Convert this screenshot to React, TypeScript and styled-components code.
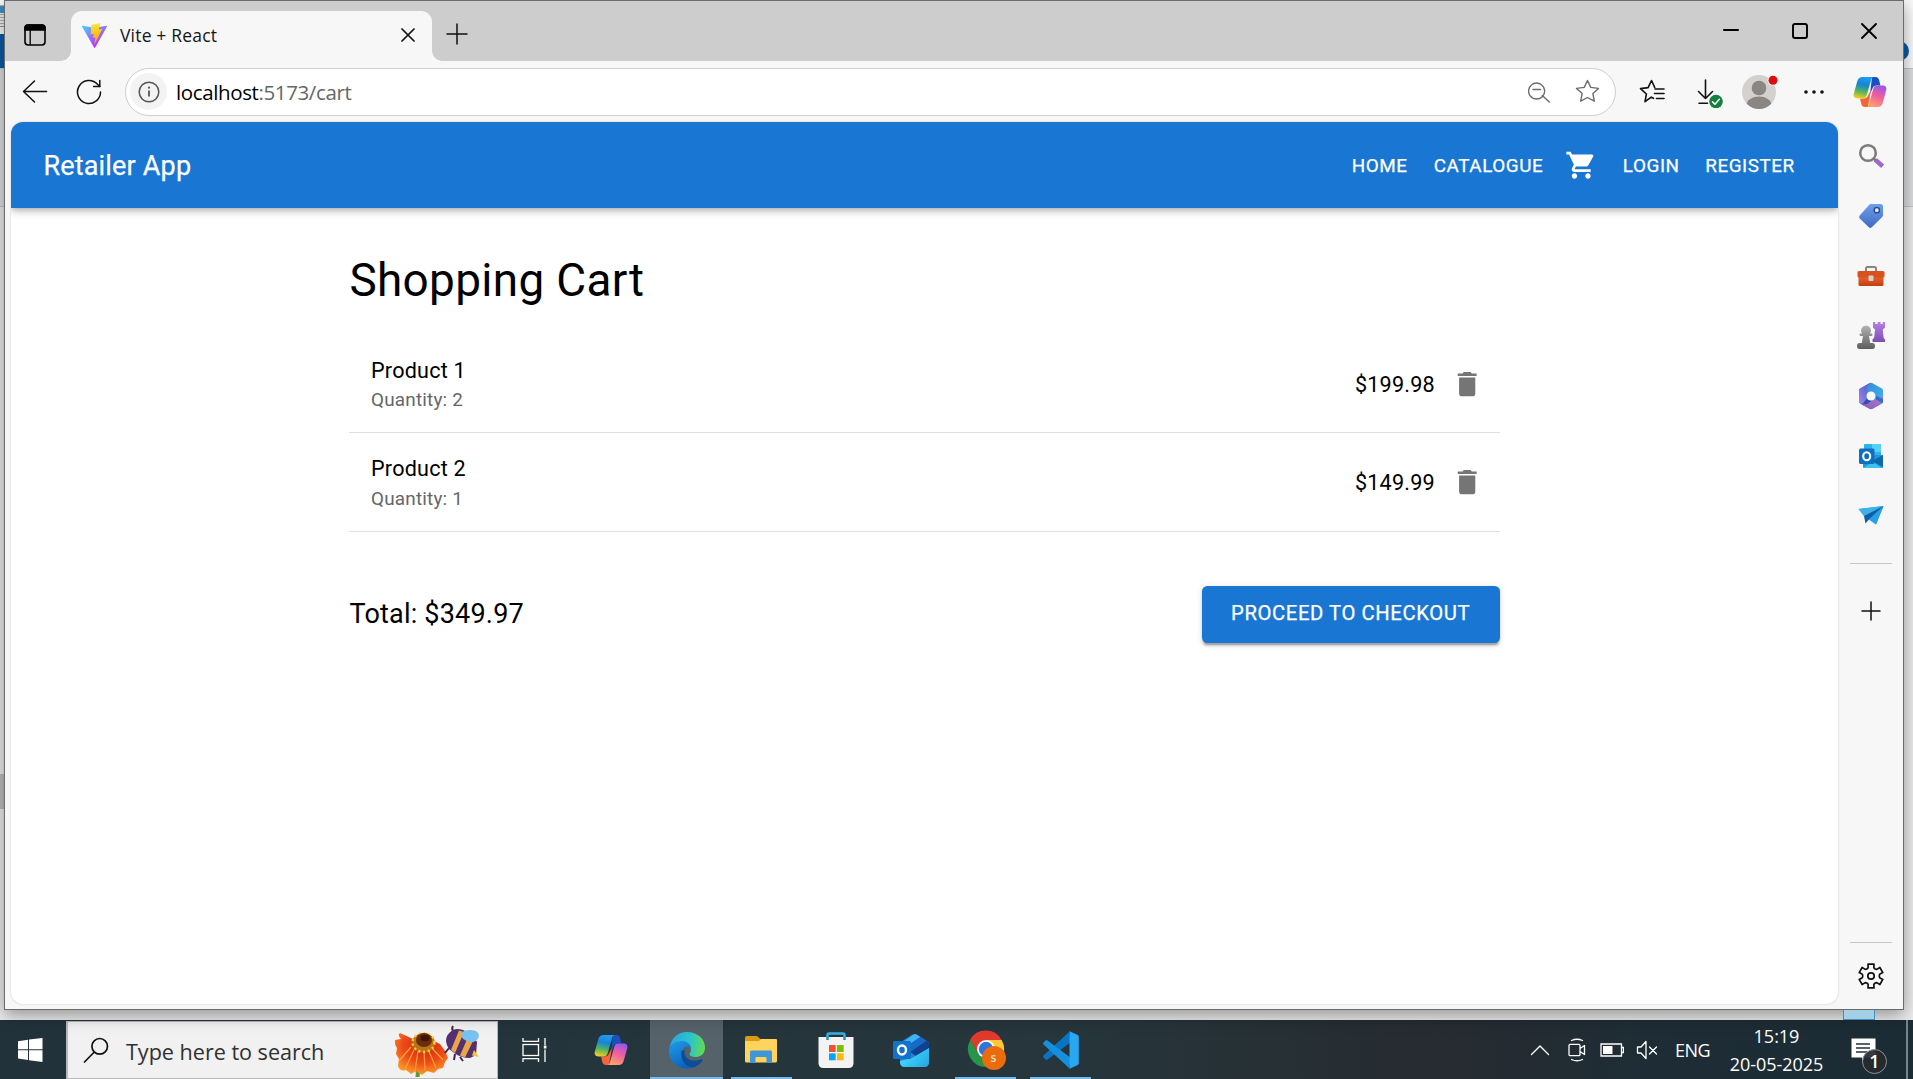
import React from "react";
import styled, { createGlobalStyle } from "styled-components";
import { MdDelete, MdShoppingCart } from "react-icons/md";

const UI = `"Open Sans", "Noto Sans", sans-serif`;
const APP = `Roboto, "Liberation Sans", sans-serif`;

const GlobalStyle = createGlobalStyle`
  * { box-sizing: border-box; }
  html, body { margin: 0; padding: 0; overflow: hidden; }
  button { border: 0; background: none; padding: 0; margin: 0; color: inherit; }
  svg { display: block; flex: none; }
`;

/* ---------- desktop ---------- */

const Desktop = styled.div`
  position: relative;
  width: 1913px;
  height: 1079px;
  overflow: hidden;
  display: flex;
  flex-direction: column;
  font-family: ${UI};
`;

const Backdrop = styled.div`
  flex: 1;
  display: flex;
  flex-direction: column;
  background: #ececec;
`;

const BackStrip = styled.div<{ $h: number; $bg: string; $line?: boolean }>`
  height: ${(p) => p.$h}px;
  background: ${(p) => p.$bg};
  border-bottom: ${(p) => (p.$line ? "1px solid #c4c6c8" : "0")};
`;

const BackAccent = styled.div`
  position: absolute;
  left: 0;
  top: 34px;
  width: 8px;
  height: 34px;
  background: #0a5ca8;
`;

const BackRibbon = styled.div`
  position: absolute;
  left: 0;
  top: 5px;
  width: 5px;
  height: 22px;
  border-top: 1px solid #b5b5b5;
  border-bottom: 1px solid #9a9a9a;
  background: repeating-linear-gradient(#f3f3f3 0 2px, #a9b0b5 2px 3px);
`;

const BackMark = styled.div`
  position: absolute;
  left: 0;
  top: 6px;
  width: 4px;
  height: 7px;
  background: #3f8fc4;
`;

const BackThumb = styled.div`
  position: absolute;
  left: 0;
  top: 774px;
  width: 5px;
  height: 35px;
  background: #bdbdbd;
`;

const BackBadge = styled.div`
  position: absolute;
  left: 1889px;
  top: 41px;
  width: 20px;
  height: 20px;
  border-radius: 50%;
  background: #0a5ca8;
`;

const BackSelection = styled.div`
  position: absolute;
  left: 1843px;
  top: 1000px;
  width: 32px;
  height: 20px;
  border: 1px solid #3a93c4;
  background: #a5cfe4;
  z-index: 3;
  clip-path: inset(10px 0 0 0);
`;

/* ---------- browser window ---------- */

const Window = styled.div`
  position: absolute;
  left: 4px;
  top: 0;
  width: 1900px;
  height: 1010px;
  border: 1px solid #6b6b6b;
  background: #f7f7f7;
  display: flex;
  flex-direction: column;
  box-shadow: 0 5px 16px rgba(0, 0, 0, 0.38);
  z-index: 2;
`;

const TitleBar = styled.div`
  height: 60px;
  flex: none;
  background: #cdcdcd;
  display: flex;
  align-items: stretch;
`;

const TabActions = styled.div`
  width: 66px;
  display: flex;
  align-items: center;
  padding: 7px 0 0 19px;
`;

const Tab = styled.div`
  position: relative;
  width: 361px;
  margin-top: 10px;
  padding: 0 17px 2px 11px;
  display: flex;
  align-items: center;
  background: #f7f7f7;
  border-radius: 11px 11px 0 0;
  &::before, &::after {
    content: "";
    position: absolute;
    bottom: 0;
    width: 10px;
    height: 10px;
  }
  &::before {
    left: -10px;
    background: radial-gradient(circle at 0 0, transparent 9.5px, #f7f7f7 10px);
  }
  &::after {
    right: -10px;
    background: radial-gradient(circle at 100% 0, transparent 9.5px, #f7f7f7 10px);
  }
`;

const TabTitle = styled.span`
  flex: 1;
  margin-left: 13px;
  font-size: 17.5px;
  letter-spacing: 0.18px;
  line-height: 24px;
  color: #151515;
`;

const NewTab = styled.button`
  width: 50px;
  display: flex;
  align-items: center;
  justify-content: center;
  padding: 6px 0 0 0;
`;

const WindowControls = styled.div`
  margin-left: auto;
  display: flex;
`;

const WindowButton = styled.button`
  width: 69px;
  display: flex;
  align-items: center;
  justify-content: center;
`;

const Toolbar = styled.div`
  height: 61px;
  flex: none;
  display: flex;
  align-items: center;
`;

const ToolButton = styled.button<{ $w: number }>`
  width: ${(p) => p.$w}px;
  height: 48px;
  flex: none;
  display: flex;
  align-items: center;
  justify-content: center;
`;

const AddressBar = styled.div`
  width: 1491px;
  height: 48px;
  flex: none;
  margin-left: 12px;
  border: 1px solid #cfcfcf;
  border-radius: 24px;
  background: #fff;
  display: flex;
  align-items: center;
  padding: 0 3px 0 4px;
`;

const SiteInfo = styled.span`
  width: 37px;
  height: 37px;
  border-radius: 50%;
  background: #f3f3f3;
  display: flex;
  align-items: center;
  justify-content: center;
`;

const Url = styled.span`
  flex: 1;
  margin-left: 9px;
  font-size: 20.5px;
  letter-spacing: -0.38px;
  line-height: 28px;
  color: #666;
  b { font-weight: 400; color: #000; }
`;

const Main = styled.div`
  flex: 1;
  display: flex;
  padding-left: 6px;
`;

const Page = styled.div`
  width: 1827px;
  height: 882px;
  background: #fff;
  border-radius: 12px;
  overflow: hidden;
  box-shadow: 0 0 2px rgba(0, 0, 0, 0.22);
  font-family: ${APP};
`;

const SideBar = styled.div`
  flex: 1;
  display: flex;
  flex-direction: column;
  align-items: center;
  padding: 4px 0 0 1px;
`;

const SideItem = styled.button<{ $h?: number }>`
  width: 60px;
  height: ${(p) => p.$h ?? 60}px;
  flex: none;
  display: flex;
  align-items: center;
  justify-content: center;
`;

const SideRule = styled.div<{ $top: number }>`
  width: 42px;
  height: 1px;
  flex: none;
  margin-top: ${(p) => p.$top}px;
  background: #c6c6c6;
`;

const Push = styled.div`
  flex: 1;
`;

/* ---------- retailer page ---------- */

const AppBar = styled.header`
  position: relative;
  height: 86.4px;
  display: flex;
  align-items: center;
  padding: 0 32.4px;
  background: #1976d2;
  color: #fff;
  box-shadow: 0 2.7px 5.4px -1.35px rgba(0, 0, 0, 0.2), 0 5.4px 6.75px rgba(0, 0, 0, 0.14),
    0 1.35px 13.5px rgba(0, 0, 0, 0.12);
`;

const Brand = styled.div`
  flex: 1;
  padding-top: 2px;
  font-size: 27px;
  font-weight: 400;
  letter-spacing: 0.18px;
  line-height: 43px;
  -webkit-text-stroke: 0.25px #fff;
`;

const NavButton = styled.button`
  min-width: 86.4px;
  padding: 8.1px 10.8px;
  font-family: ${APP};
  font-size: 18.9px;
  font-weight: 400;
  line-height: 33px;
  letter-spacing: 0.54px;
  -webkit-text-stroke: 0.25px #fff;
`;

const IconButton = styled.button<{ $color: string; $pull?: boolean }>`
  padding: 10.8px;
  margin-right: ${(p) => (p.$pull ? "-16.2px" : "0")};
  color: ${(p) => p.$color};
  svg { width: 32.4px; height: 32.4px; }
`;

const Container = styled.main`
  width: 1150.2px;
  margin: 0 auto;
  padding-top: 43.2px;
`;

const Heading = styled.h1`
  margin: 0 0 16.07px;
  font-size: 45.9px;
  font-weight: 400;
  line-height: 56.7px;
  letter-spacing: 0.34px;
  color: #000;
`;

const CartList = styled.ul`
  list-style: none;
  margin: 0;
  padding: 10.8px 0;
`;

const CartRow = styled.li`
  height: 98.25px;
  display: flex;
  align-items: center;
  padding: 0 21.6px;
  border-bottom: 1px solid #e0e0e0;
`;

const ItemText = styled.div`
  flex: 1;
`;

const ItemName = styled.div`
  padding-top: 1px;
  font-size: 21.6px;
  line-height: 32.4px;
  letter-spacing: 0.2px;
  color: #000;
`;

const ItemMeta = styled.div`
  margin-top: -1px;
  font-size: 18.9px;
  line-height: 27px;
  letter-spacing: 0.2px;
  color: #666;
`;

const Price = styled.div`
  margin-right: 5.4px;
  padding-top: 2px;
  font-size: 21.6px;
  line-height: 32.4px;
  letter-spacing: 0.2px;
  color: #000;
`;

const Summary = styled.div`
  margin-top: 43.2px;
  display: flex;
  align-items: center;
  justify-content: space-between;
`;

const Total = styled.div`
  padding-top: 1px;
  font-size: 27px;
  line-height: 43px;
  letter-spacing: 0.2px;
  color: #000;
`;

const Checkout = styled.button`
  width: 298px;
  padding: 10.8px 0;
  border-radius: 5.4px;
  background: #1976d2;
  color: #fff;
  font-family: ${APP};
  font-size: 20.25px;
  font-weight: 400;
  line-height: 35.4px;
  letter-spacing: 0.58px;
  white-space: nowrap;
  -webkit-text-stroke: 0.25px #fff;
  box-shadow: 0 4px 1.35px -2.7px rgba(0, 0, 0, 0.2), 0 2.7px 2.7px rgba(0, 0, 0, 0.14),
    0 1.35px 6.75px rgba(0, 0, 0, 0.12);
`;

/* ---------- taskbar ---------- */

const Taskbar = styled.div`
  height: 59px;
  flex: none;
  display: flex;
  background: linear-gradient(90deg, #22323b 0, #26363c 55%, #262c31 74%, #242b32 79%, #1e2d35 86%, #1c2c34 100%);
  color: #fff;
`;

const StartTile = styled.div`
  width: 66px;
  display: flex;
  align-items: center;
  padding-left: 18px;
`;

const SearchBox = styled.div`
  width: 432px;
  margin-top: 1px;
  border: 1px solid #b9b9b9;
  border-left-width: 2px;
  background: #f1f1f1;
  display: flex;
  align-items: center;
  padding-left: 15px;
`;

const SearchText = styled.span`
  flex: 1;
  margin: 3px 0 0 17px;
  font-size: 21.6px;
  letter-spacing: -0.02px;
  line-height: 30px;
  color: #303030;
`;

const TaskTile = styled.div<{ $w?: number; $active?: boolean; $line?: boolean }>`
  width: ${(p) => p.$w ?? 75}px;
  display: flex;
  align-items: center;
  justify-content: center;
  background: ${(p) => (p.$active ? "#55626a" : "transparent")};
  border-bottom: ${(p) => (p.$active ? "2px solid #76b9ed" : "0")};
  background-image: ${(p) => (p.$line ? "linear-gradient(#76b9ed, #76b9ed)" : "none")};
  background-size: 61px 2px;
  background-position: center bottom;
  background-repeat: no-repeat;
  padding-top: ${(p) => (p.$active ? 2 : 0)}px;
`;

const Tray = styled.div`
  margin-left: auto;
  display: flex;
  align-items: center;
`;

const TrayIcon = styled.div<{ $w: number }>`
  width: ${(p) => p.$w}px;
  display: flex;
  justify-content: center;
`;

const Lang = styled.div`
  width: 56px;
  text-align: center;
  font-size: 18px;
  letter-spacing: -0.5px;
  padding-left: 3px;
`;

const Clock = styled.div`
  width: 114px;
  padding: 1px 0 0 1px;
  display: flex;
  flex-direction: column;
  align-items: center;
  font-size: 18px;
  line-height: 28px;
  letter-spacing: -0.02px;
  white-space: nowrap;
`;

const Notify = styled.div`
  position: relative;
  width: 73px;
  height: 59px;
  padding: 18px 0 0 18px;
`;

const NotifyCount = styled.span`
  position: absolute;
  left: 29px;
  top: 29px;
  width: 25px;
  height: 25px;
  border: 1px solid #8b9297;
  border-radius: 50%;
  background: rgba(38, 42, 46, 0.93);
  font-size: 18px;
  font-weight: 600;
  line-height: 23px;
  text-align: center;
`;

const ShowDesktop = styled.div`
  width: 7px;
  height: 59px;
  border-left: 2px solid #7a8388;
`;

/* ---------- drawings ---------- */

const Line = ({ d, size = 24, box = 24, w = 1.3, color = "#111" }: { d: string; size?: number; box?: number; w?: number; color?: string }) => (
  <svg width={size} height={size} viewBox={`0 0 ${box} ${box}`} fill="none" stroke={color} strokeWidth={w} strokeLinecap="round" strokeLinejoin="round">
    <path d={d} />
  </svg>
);

const WorkspaceIcon = () => (
  <svg width="22" height="22" viewBox="0 0 22 22" fill="none" stroke="#000" strokeWidth="1.6">
    <rect x="1" y="1" width="20" height="20" rx="3.2" />
    <path d="M1 6V4a3 3 0 0 1 3-3h14a3 3 0 0 1 3 3v2z" fill="#000" />
    <path d="M6.2 6v15" strokeWidth="1.3" />
  </svg>
);

const ViteIcon = () => (
  <svg width="25" height="25" viewBox="0 0 256 257">
    <defs>
      <linearGradient id="viteA" x1="0" x2="0.6" y1="0" y2="0.85">
        <stop offset="0" stopColor="#41d1ff" />
        <stop offset="1" stopColor="#bd34fe" />
      </linearGradient>
      <linearGradient id="viteB" x1="0.43" x2="0.5" y1="0.02" y2="0.9">
        <stop offset="0" stopColor="#ffea83" />
        <stop offset="0.1" stopColor="#ffdd35" />
        <stop offset="1" stopColor="#ffa800" />
      </linearGradient>
    </defs>
    <path fill="url(#viteA)" d="M255.153 37.938 134.897 252.976c-2.483 4.44-8.862 4.466-11.382.048L.875 37.958c-2.746-4.814 1.371-10.646 6.827-9.67l120.385 21.517a6.537 6.537 0 0 0 2.322-.004l117.867-21.483c5.438-.991 9.574 4.796 6.877 9.62Z" />
    <path fill="url(#viteB)" d="M185.432.063 96.44 17.501a3.268 3.268 0 0 0-2.634 3.014l-5.474 92.456a3.268 3.268 0 0 0 3.997 3.378l24.777-5.718c2.318-.535 4.413 1.507 3.936 3.838l-7.361 36.047c-.495 2.426 1.782 4.5 4.151 3.78l15.304-4.649c2.372-.72 4.652 1.36 4.15 3.788l-11.698 56.621c-.732 3.542 3.979 5.473 5.943 2.437l1.313-2.028 72.516-144.72c1.215-2.423-.88-5.186-3.54-4.672l-25.505 4.922c-2.396.462-4.435-1.77-3.759-4.114l16.646-57.705c.677-2.35-1.37-4.583-3.769-4.113Z" />
  </svg>
);

const InfoIcon = () => (
  <svg width="22" height="22" viewBox="0 0 22 22" fill="none" stroke="#555" strokeWidth="1.5">
    <circle cx="11" cy="11" r="9.8" />
    <path d="M11 9.5V15.5" strokeWidth="1.8" />
    <circle cx="11" cy="6.7" r="1.1" fill="#555" stroke="none" />
  </svg>
);

const ReloadIcon = () => (
  <svg width="26" height="26" viewBox="0 0 26 26" fill="none" stroke="#111" strokeWidth="1.5" strokeLinecap="round" strokeLinejoin="round">
    <path d="M24.500 13A11.500 11.500 0 1 1 21.500 5.300L23.800 7.400" />
    <path d="M23.800 1.600V7.400H17.600" />
  </svg>
);

const ZoomOutIcon = () => (
  <Line size={22} box={22} w={1.4} color="#6c6c6c" d="M16.500 8.800a8 8 0 1 1-15.800 0a8 8 0 0 1 15.800 0M5 8.500h7.500M14.300 14.400L21.300 21" />
);

const STAR = "M12.500 1.500l3.300 6.900 7.700 1-5.600 5.200 1.400 7.600-6.800-3.700-6.800 3.700 1.400-7.600L1.500 9.400l7.700-1z";

const FavoritesIcon = () => (
  <Line size={26} box={26} w={1.6} d="M14.500 19.300L12.300 18.100 6 22.700 7.400 15 1.500 9.600l7.600-1L12.500 1.500l3.200 6.900M16 10h9M15.500 14.500h9.500M17.500 19.500H25" />
);

const DownloadIcon = () => (
  <svg width="30" height="32" viewBox="0 0 30 32" fill="none" stroke="#111" strokeWidth="1.6" strokeLinecap="round" strokeLinejoin="round">
    <path d="M9.500 4v18.500M2.500 15.500l7 7 7-7M3 27.300h8.500" />
    <circle cx="20" cy="25.500" r="6.800" fill="#15803d" stroke="none" />
    <path d="M16.500 25.800l2.400 2.400 4.500-5" stroke="#fff" strokeWidth="1.500" />
  </svg>
);

const ProfileIcon = () => (
  <svg width="38" height="36" viewBox="0 0 38 36">
    <defs>
      <clipPath id="face"><circle cx="18" cy="18" r="17" /></clipPath>
    </defs>
    <g clipPath="url(#face)">
      <rect width="38" height="36" fill="#d3d1ce" />
      <circle cx="18" cy="14" r="7.3" fill="#8a8684" />
      <ellipse cx="18" cy="31" rx="12.5" ry="8.4" fill="#8a8684" />
    </g>
    <circle cx="32" cy="6.200" r="5.400" fill="#f7f7f7" />
    <circle cx="32" cy="6.200" r="4.500" fill="#e00b0b" />
  </svg>
);

const MoreIcon = () => (
  <svg width="20" height="6" viewBox="0 0 20 6" fill="#111">
    <circle cx="2" cy="3" r="1.8" /><circle cx="10" cy="3" r="1.8" /><circle cx="18" cy="3" r="1.8" />
  </svg>
);

const CopilotIcon = ({ id }: { id: string }) => (
  <svg width="34" height="34" viewBox="0 0 34 34">
    <defs>
      <linearGradient id={id + "a"} x1="0.5" y1="0" x2="0.3" y2="1">
        <stop offset="0" stopColor="#1e9cf0" /><stop offset="0.35" stopColor="#1784d8" />
        <stop offset="0.65" stopColor="#4fb262" /><stop offset="1" stopColor="#f2cf1d" />
      </linearGradient>
      <linearGradient id={id + "b"} x1="0.7" y1="0" x2="0.3" y2="1">
        <stop offset="0" stopColor="#9a57ee" /><stop offset="0.45" stopColor="#ee5d9f" />
        <stop offset="1" stopColor="#ffa36b" />
      </linearGradient>
    </defs>
    <path d="M19 2h3.400c2 0 3.200 1.200 3.700 3l1.300 5.500h-3.400c-2.500 0-3.900 1-4.600 3.200L17 19z" fill="#1b4fc4" />
    <path d="M15 32h-3c-2 0-3.200-1.200-3.700-3L7 23.500h3.400c2.500 0 3.900-1 4.600-3.200L18 15z" fill="#f4663a" />
    <path d="M9.500 2H21c-1.400 0-2.300 1-2.800 2.600L13.800 20c-.7 2.400-1.900 3.500-4.300 3.500H4.600C1.400 23.500.2 21.500.8 18.800L4.200 6.500C5 3.500 6.500 2 9.500 2z" fill={`url(#${id}a)`} />
    <path d="M24.500 32H13c1.400 0 2.300-1 2.800-2.600L20.200 14c.7-2.400 1.900-3.500 4.300-3.500h4.900c3.200 0 4.400 2 3.800 4.700l-3.400 12.300c-.8 3-2.300 4.500-5.300 4.500z" fill={`url(#${id}b)`} />
  </svg>
);

const SideSearchIcon = () => (
  <svg width="26" height="26" viewBox="0 0 26 26" fill="none">
    <circle cx="10" cy="10" r="7.800" stroke="#7b7b7b" strokeWidth="2.500" />
    <path d="M15.500 15.500l3.500 3" stroke="#777" strokeWidth="2.500" />
    <path d="M19 18.300l4 3.500" stroke="#9a68cf" strokeWidth="4.500" strokeLinecap="square" />
  </svg>
);

const TagIcon = () => (
  <svg width="26" height="26" viewBox="0 0 26 26">
    <defs><linearGradient id="tag" x1="0.5" y1="0" x2="0.5" y2="1"><stop offset="0" stopColor="#6ba1ea" /><stop offset="1" stopColor="#4169c4" /></linearGradient></defs>
    <path d="M13 1h9.500Q25 1 25 3.500V12q0 1-.8 1.900L13.800 24.300q-1.500 1.300-3 0L1.700 15.400q-1.300-1.500 0-3L11.300 1.800Q12 1 13 1z" fill="url(#tag)" />
    <circle cx="18.800" cy="7.200" r="2.600" fill="#eef4ff" stroke="#274a9a" strokeWidth="1.500" />
  </svg>
);

const ToolboxIcon = () => (
  <svg width="28" height="22" viewBox="0 0 28 22">
    <defs><linearGradient id="tb" x1="0" y1="0" x2="0" y2="1"><stop offset="0" stopColor="#f0702f" /><stop offset="1" stopColor="#c33d10" /></linearGradient></defs>
    <path d="M9 7V3.500Q9 2 10.500 2h7Q19 2 19 3.500V7" fill="none" stroke="#858585" strokeWidth="2" />
    <rect x="1.500" y="9" width="25" height="12" rx="1.500" fill="url(#tb)" />
    <rect x="0.500" y="6" width="27" height="6.500" rx="1.500" fill="#d9511c" />
    <rect x="11.500" y="10.500" width="5" height="5.500" rx="1" fill="#d0d0d0" />
  </svg>
);

const ChessIcon = () => (
  <svg width="28" height="28" viewBox="0 0 28 28">
    <defs>
      <linearGradient id="pawn" x1="0" y1="0" x2="0" y2="1"><stop offset="0" stopColor="#b3b3b3" /><stop offset="1" stopColor="#5d5d5d" /></linearGradient>
      <linearGradient id="rook" x1="0" y1="0" x2="0" y2="1"><stop offset="0" stopColor="#b381e6" /><stop offset="1" stopColor="#7e4fae" /></linearGradient>
    </defs>
    <path d="M16 0h2.200v2h2.300V0h3v2h2.300V0H28v5.500l-2.200 2 .7 8 1.500 2v2.500H15.500v-2.500l1.700-2 .8-8-2-2z" fill="url(#rook)" />
    <path d="M9 3.500a5 5 0 0 1 4 8h1.500q1 0 1 1.300t-1 1.300H12l1.200 7H15.500q2.500 0 2.500 3t-2.500 3h-13Q0 27.100 0 24.100t2.500-3H4.800l1.200-7H3.500q-1 0-1-1.300t1-1.300H5a5 5 0 0 1 4-8z" fill="url(#pawn)" />
  </svg>
);

const M365Icon = () => (
  <svg width="26" height="28" viewBox="0 0 26 28">
    <defs>
      <linearGradient id="ma" x1="0" y1="0" x2="1" y2="0.600"><stop offset="0" stopColor="#3b78d8" /><stop offset="1" stopColor="#3ab4e6" /></linearGradient>
      <linearGradient id="mb" x1="0" y1="1" x2="1" y2="0"><stop offset="0" stopColor="#8a58b8" /><stop offset="1" stopColor="#b07ad0" /></linearGradient>
      <linearGradient id="mc" x1="0" y1="1" x2="1" y2="0"><stop offset="0" stopColor="#a78be8" /><stop offset="1" stopColor="#4452c8" /></linearGradient>
      <clipPath id="hex"><path d="M11.400 1.200q1.600-.900 3.200 0l8.900 5.100Q25 7.200 25 8.800V19.200q0 1.600-1.500 2.500l-8.900 5.100q-1.600.900-3.200 0L2.500 21.700Q1 20.800 1 19.200V8.800Q1 7.200 2.500 6.300z" /></clipPath>
    </defs>
    <g clipPath="url(#hex)">
      <rect width="26" height="28" fill="url(#ma)" />
      <path d="M0 0H13L8.500 5V20L5 23 0 22z" fill="url(#mc)" />
      <path d="M2 22L9 19.500l6-1.500 11-4V28H4z" fill="url(#mb)" />
      <path d="M17.500 13.500L26 17.500V22l-8-4.500z" fill="#2b6fd0" />
      <path d="M8.500 17L4 22.500l5-.500 5-3.500z" fill="#2f4fb0" />
    </g>
    <circle cx="13" cy="14" r="4.500" fill="#f7f7f7" />
  </svg>
);

const OutlookIcon = () => (
  <svg width="26" height="26" viewBox="0 0 26 26">
    <path d="M6 2q0-1 1-1h15q1 0 1 1v12H6z" fill="#2fb1ea" />
    <path d="M14 1h8q1 0 1 1v7h-9z" fill="#55d0f7" />
    <path d="M5 12l20 0v12q0 1-1 1H6q-1 0-1-1z" fill="#2296dc" />
    <path d="M25 12v12l-11-6z" fill="#1266a9" />
    <path d="M5 25h19l-9-6z" fill="#3fc0f2" />
    <rect x="1" y="5.500" width="15.500" height="15.500" rx="1.500" fill="#0d6fc0" />
    <ellipse cx="8.700" cy="13.200" rx="3.500" ry="4" fill="none" stroke="#fff" strokeWidth="2.100" />
  </svg>
);

const PlaneIcon = () => (
  <svg width="26" height="22" viewBox="0 0 26 22">
    <path d="M.500 4L25.500 1 18 19.500 12.500 15.500z" fill="#2d9fe0" />
    <path d="M.500 4L25.500 1 6.500 12z" fill="#3fb0ea" />
    <path d="M6 11l19.500-10L11 14.500 7.500 18.500z" fill="#0f5ea8" />
    <path d="M25.500 1L18 19.500l-7-5z" fill="#27a0e5" />
  </svg>
);

const GearIcon = () => {
  const pts: string[] = [];
  for (let i = 0; i < 6; i++) {
    const at = (deg: number, r: number) => {
      const a = ((i * 60 + deg - 90) * Math.PI) / 180;
      return `${(14 + Math.cos(a) * r).toFixed(2)} ${(14 + Math.sin(a) * r).toFixed(2)}`;
    };
    pts.push(`${i ? "L" : "M"}${at(-14, 12.3)}L${at(14, 12.3)}L${at(19, 8.8)}Q${at(30, 7.8)} ${at(41, 8.8)}`);
  }
  return (
    <svg width="28" height="28" viewBox="0 0 28 28" fill="none" stroke="#111" strokeWidth="1.7" strokeLinejoin="round">
      <path d={pts.join("") + "Z"} />
      <circle cx="14" cy="14" r="3.200" />
    </svg>
  );
};

const WindowsIcon = () => (
  <svg width="25" height="24" viewBox="0 0 25 24" fill="#fff">
    <path d="M0 3.200L10 1.800V11.300H0zM11 1.600L24.500 0v11.300H11zM0 12.300h10v9.600L0 20.600zM11 12.300h13.500V24L11 22.200z" />
  </svg>
);

const FlowerBee = () => (
  <svg width="86" height="54" viewBox="2 -4 86 54">
    <defs>
      <radialGradient id="petal" cx="0.550" cy="0.300" r="0.800"><stop offset="0" stopColor="#c9260e" /><stop offset="0.500" stopColor="#ee4a17" /><stop offset="1" stopColor="#ffb52e" /></radialGradient>
    </defs>
    <path d="M24 42q2 6-1 12" stroke="#5f9b2a" strokeWidth="4" fill="none" />
    <path d="M20 12L7 6Q4 8 8 12L2 13q-1 4 2 8l-1 6 3 5-1 7q2 6 8 4l5 4 5-3 6 4 5-4 7 2 4-4 5-1 2-6 3-4-3-7-5-7-10-5z" fill="url(#petal)" />
    <path d="M18 20L6 34M21 23l-9 19M25 24l-3 20M31 24l1 19M35 22l8 19M38 20l12 13" stroke="#ffa233" strokeWidth="1.200" fill="none" />
    <ellipse cx="30.500" cy="16" rx="11.500" ry="10" fill="#b9741a" />
    <ellipse cx="30.500" cy="15.500" rx="11" ry="9.500" fill="none" stroke="#ffcb45" strokeWidth="2.400" strokeDasharray="2 2.800" />
    <ellipse cx="31" cy="13" rx="8" ry="7" fill="#6b2d0c" />
    <ellipse cx="32" cy="11" rx="4.500" ry="3.200" fill="#3f1605" />
    <g transform="translate(0 1)">
      <path d="M61 4Q58 1 60-2M56 20l-4 5M62 26l-1 6M67 29l3 4" stroke="#3d2752" strokeWidth="2" fill="none" />
      <path d="M60 2Q53 6 53 13q1 8 7 11 7 6 17 6l6-3 1-13Q80 6 70 2 64 0 60 2z" fill="#54306f" />
      <path d="M66 2.500l5 1.500-9 21-4-3zM75 9l4.500 5L72 29.500l-5-2z" fill="#eba54a" />
      <path d="M81 22l5 7-7-1.500z" fill="#f3c33c" />
      <path d="M68 6q2-4 9-4 9 0 9 6-2 7-9 6-9-2-9-8z" fill="#79c1ee" />
    </g>
  </svg>
);

const TaskViewIcon = () => (
  <svg width="26" height="24" viewBox="0 0 26 24" fill="none" stroke="#fff" strokeWidth="1.300">
    <path d="M1 0v3.300h15.500V0M1 24v-3.300h15.500V24" />
    <rect x="1" y="6.500" width="15.500" height="11" />
    <path d="M23 0v7M23 11.500V24" />
    <rect x="21.800" y="7.500" width="2.600" height="3" fill="#fff" stroke="none" />
  </svg>
);

const EdgeIcon = () => (
  <svg width="38" height="38" viewBox="0 0 38 38">
    <defs>
      <linearGradient id="eg" x1="0" y1="0.500" x2="1" y2="0.600"><stop offset="0" stopColor="#2aa5e0" /><stop offset="0.550" stopColor="#2bc3cf" /><stop offset="1" stopColor="#61dd4b" /></linearGradient>
      <linearGradient id="eb" x1="0" y1="0" x2="0.500" y2="1"><stop offset="0" stopColor="#1f9de8" /><stop offset="1" stopColor="#0b63bd" /></linearGradient>
    </defs>
    <path d="M1.500 17C3 7 10 1 19 1c10.500 0 18 7 18 15.500 0 6-4 9.500-9 9.500-4 0-6.500-1.300-6.500-2.800 0-1 1.500-1.700 1.500-4.700C23 14 19 11 13.500 11 7 11 3 14 1.500 17z" fill="url(#eg)" />
    <path d="M1 19c1-6 6.500-9 12.500-9 5.500 0 9.500 3.500 9.500 7.500-1-1.500-2.500-2-4-2-3 0-5 3.500-5 7.500 0 6.500 4.500 12 11.500 13.300C22 37.200 20.500 37.500 19 37.500 8 37.500.300 28.500 1 19z" fill="url(#eb)" />
    <path d="M13.500 20c-1.500 10 5 17 12.500 16.300 3.500-1.300 6.500-3.700 8.500-6.800.600-.900-.200-1.600-1-1.200C24 32 15.500 28.500 16.500 19z" fill="#0e4c96" />
  </svg>
);

const FolderIcon = () => (
  <svg width="34" height="32" viewBox="0 0 34 32">
    <path d="M1 4q0-2 2-2h10l4 3.500V9H1z" fill="#dc9a12" />
    <path d="M1 7h14l2-2h15q1 0 1 1v21q0 1.500-1.500 1.500h-29Q1 28.500 1 27z" fill="#ffd35c" />
    <path d="M6 29V18q0-1.500 1.500-1.500h19Q28 16.500 28 18v11h-5.500v-5q0-1-1-1h-9q-1 0-1 1v5z" fill="#3f97da" />
  </svg>
);

const StoreIcon = () => (
  <svg width="36" height="38" viewBox="0 0 36 38">
    <path d="M9.500 10V4Q9.500 2.500 11 2.500h14Q26.500 2.500 26.500 4v6" fill="none" stroke="#35b3e3" strokeWidth="2.500" />
    <path d="M.500 6h35v26q0 5-5 5h-25q-5 0-5-5z" fill="#f3f3f3" />
    <path d="M9.500 6v3M26.500 6v3" stroke="#238cc4" strokeWidth="2.500" />
    <path d="M11 14h6.700v7H11z" fill="#f0512a" /><path d="M19 14h6.700v7H19z" fill="#80bb09" />
    <path d="M11 22.300h6.700v7H11z" fill="#06a5ef" /><path d="M19 22.300h6.700v7H19z" fill="#ffba08" />
  </svg>
);

const NewOutlookIcon = () => (
  <svg width="38" height="38" viewBox="0 0 38 38">
    <defs>
      <linearGradient id="oc" x1="0" y1="0.300" x2="1" y2="1"><stop offset="0" stopColor="#56dcf8" /><stop offset="0.500" stopColor="#2fc0f0" /><stop offset="1" stopColor="#2b9be4" /></linearGradient>
      <clipPath id="env"><path d="M8 13Q8 11.500 9.500 10.500L20.500 3.500Q22.500 2.500 24.500 3.500L35.500 10.500Q37 11.500 37 13.500V31q0 5-5 5H13q-5 0-5-5z" /></clipPath>
    </defs>
    <g clipPath="url(#env)">
      <rect width="38" height="38" fill="#1a86dc" />
      <path d="M8 13L24 2l5 3.500L12 17z" fill="#3fb4f0" />
      <path d="M29 5.500l6 4L18 21l-6-4z" fill="#1769c6" />
      <path d="M35 9.500l2.500 3V17L24 25l-6-4z" fill="#123f8e" />
      <path d="M38 16.500V38H8v-8l12-3z" fill="url(#oc)" />
    </g>
    <rect x="1" y="10" width="18" height="18" rx="1.500" fill="#1172cb" />
    <ellipse cx="10" cy="19" rx="4" ry="4.500" fill="none" stroke="#fff" strokeWidth="2.400" />
  </svg>
);

const ChromeGlyph = styled.div`
  position: relative;
  width: 38px;
  height: 40px;
`;

const ChromeBadge = styled.span`
  position: absolute;
  left: 15px;
  top: 16px;
  width: 24px;
  height: 24px;
  border-radius: 50%;
  background: #ea6c0a;
  color: #ffdfc4;
  font-size: 12px;
  font-weight: 600;
  line-height: 23px;
  text-align: center;
`;

const ChromeIcon = () => (
  <ChromeGlyph>
    <svg width="38" height="38" viewBox="0 0 38 38">
      <path d="M3 10A18 18 0 0 1 34.600 10L19 10.500 11.200 23.500z" fill="#df3a2c" />
      <path d="M34.600 10A18 18 0 0 1 19 37L26.800 23.500 19 10z" fill="#fcc934" />
      <path d="M19 37A18 18 0 0 1 3.400 10l7.800 13.500L26.800 23.500z" fill="#26964a" />
      <circle cx="19" cy="19" r="9" fill="#fff" />
      <circle cx="19" cy="19" r="7.200" fill="#2f74e0" />
    </svg>
    <ChromeBadge>s</ChromeBadge>
  </ChromeGlyph>
);

const CodeIcon = () => (
  <svg width="38" height="38" viewBox="0 0 38 38">
    <path d="M27 1L1.500 24.500q-1 1 0 2l2 2q1 .800 2 0L29 11z" fill="#0a74c4" />
    <path d="M27 37L1.500 13.500q-1-1 0-2l2-2q1-.800 2 0L29 27z" fill="#1590dc" />
    <path d="M26.500.800q.800-.600 1.700-.200l7.500 3.500q1.100.500 1.100 1.800v26.200q0 1.300-1.100 1.800l-7.500 3.500q-.900.400-1.700-.200 1 .400 1-1V1.800q0-1.400-1-1z" fill="#2aa7f2" />
  </svg>
);

const CameraIcon = () => (
  <Line size={24} box={24} w={1.300} color="#fff" d="M6.500 2.500q5.500-2.500 11 0M6.500 21.500q5.500 2.500 11 0M4 7.500q0-1.200 1.200-1.200h8.600q1.200 0 1.200 1.200v9q0 1.200-1.200 1.200H5.200Q4 17.700 4 16.500zM15 10.500l4.500-3v9L15 13.500" />
);

const BatteryIcon = () => (
  <svg width="24" height="14" viewBox="0 0 24 14">
    <path d="M1 1h20.500v12H1zM22 4.500h1.500v5H22" fill="none" stroke="#fff" strokeWidth="1.300" />
    <path d="M3 3h9.500v8H3z" fill="#fff" />
  </svg>
);

const MutedIcon = () => (
  <Line size={22} box={22} w={1.300} color="#fff" d="M1.500 8h3.500L10 2.500v17L5 14H1.500zM13.500 8l7 7M20.500 8l-7 7" />
);

const MessageIcon = () => (
  <svg width="25" height="26" viewBox="0 0 25 26">
    <path d="M.500.500h24V19.500H14l-3 5.500V19.500H.500z" fill="#fff" />
    <path d="M5 6h14M5 10h14M5 14h11" stroke="#22323b" strokeWidth="1.300" />
  </svg>
);

/* ---------- page ---------- */

const items = [
  { name: "Product 1", quantity: 2, price: 99.99 },
  { name: "Product 2", quantity: 1, price: 149.99 },
];

const total = items.reduce((sum, i) => sum + i.price * i.quantity, 0);

const RetailerPage = () => (
  <Page>
    <AppBar>
      <Brand>Retailer App</Brand>
      <NavButton>HOME</NavButton>
      <NavButton>CATALOGUE</NavButton>
      <IconButton $color="#fff"><MdShoppingCart /></IconButton>
      <NavButton>LOGIN</NavButton>
      <NavButton>REGISTER</NavButton>
    </AppBar>
    <Container>
      <Heading>Shopping Cart</Heading>
      <CartList>
        {items.map((item) => (
          <CartRow key={item.name}>
            <ItemText>
              <ItemName>{item.name}</ItemName>
              <ItemMeta>Quantity: {item.quantity}</ItemMeta>
            </ItemText>
            <Price>{`$${(item.price * item.quantity).toFixed(2)}`}</Price>
            <IconButton $color="#757575" $pull><MdDelete /></IconButton>
          </CartRow>
        ))}
      </CartList>
      <Summary>
        <Total>{`Total: $${total.toFixed(2)}`}</Total>
        <Checkout>PROCEED TO CHECKOUT</Checkout>
      </Summary>
    </Container>
  </Page>
);

export default function App() {
  return (
    <Desktop>
      <GlobalStyle />
      <Backdrop>
        <BackStrip $h={69} $bg="#fafafa" $line />
        <BackStrip $h={138} $bg="#dcdee0" $line />
      </Backdrop>
      <BackRibbon />
      <BackMark />
      <BackAccent />
      <BackThumb />
      <BackBadge />
      <BackSelection />

      <Window>
        <TitleBar>
          <TabActions><WorkspaceIcon /></TabActions>
          <Tab>
            <ViteIcon />
            <TabTitle>Vite + React</TabTitle>
            <Line size={14} box={14} w={1.7} d="M1 1l12 12M13 1L1 13" />
          </Tab>
          <NewTab><Line size={22} box={22} w={1.5} d="M11 1v20M1 11h20" /></NewTab>
          <WindowControls>
            <WindowButton><Line size={16} box={16} w={2} color="#000" d="M1 7h14" /></WindowButton>
            <WindowButton><Line size={16} box={16} w={1.9} color="#000" d="M3 1h10q2 0 2 2v10q0 2-2 2H3q-2 0-2-2V3q0-2 2-2" /></WindowButton>
            <WindowButton><Line size={16} box={16} w={1.9} color="#000" d="M1 1l14 14M15 1L1 15" /></WindowButton>
          </WindowControls>
        </TitleBar>

        <Toolbar>
          <ToolButton $w={60}><Line size={26} box={26} w={1.5} d="M1.500 12.500h23M12.500 2L1.500 12.500l11 10.500" /></ToolButton>
          <ToolButton $w={48}><ReloadIcon /></ToolButton>
          <AddressBar>
            <SiteInfo><InfoIcon /></SiteInfo>
            <Url><b>localhost</b>:5173/cart</Url>
            <ToolButton $w={46}><ZoomOutIcon /></ToolButton>
            <ToolButton $w={50}><Line size={25} box={25} w={1.4} color="#6c6c6c" d={STAR} /></ToolButton>
          </AddressBar>
          <ToolButton $w={72}><FavoritesIcon /></ToolButton>
          <ToolButton $w={46}><DownloadIcon /></ToolButton>
          <ToolButton $w={52}><ProfileIcon /></ToolButton>
          <ToolButton $w={56}><MoreIcon /></ToolButton>
          <ToolButton $w={56}><CopilotIcon id="cs" /></ToolButton>
        </Toolbar>

        <Main>
          <RetailerPage />
          <SideBar>
            <SideItem $h={59}><SideSearchIcon /></SideItem>
            <SideItem $h={61}><TagIcon /></SideItem>
            <SideItem><ToolboxIcon /></SideItem>
            <SideItem><ChessIcon /></SideItem>
            <SideItem><M365Icon /></SideItem>
            <SideItem $h={59}><OutlookIcon /></SideItem>
            <SideItem $h={61}><PlaneIcon /></SideItem>
            <SideRule $top={17} />
            <SideItem $h={94}><Line size={20} box={20} w={1.5} d="M10 1v18M1 10h18" /></SideItem>
            <Push />
            <SideRule $top={0} />
            <SideItem $h={66}><GearIcon /></SideItem>
          </SideBar>
        </Main>
      </Window>

      <Taskbar>
        <StartTile><WindowsIcon /></StartTile>
        <SearchBox>
          <Line size={26} box={26} w={1.7} d="M24.500 9.300a7.800 7.800 0 1 1-15.600 0a7.800 7.800 0 0 1 15.600 0M11.300 15L1.500 25" />
          <SearchText>Type here to search</SearchText>
          <FlowerBee />
          <TaskTile $w={16} />
        </SearchBox>
        <TaskTile $w={74}><TaskViewIcon /></TaskTile>
        <TaskTile $w={78}><CopilotIcon id="ct" /></TaskTile>
        <TaskTile $w={73} $active><EdgeIcon /></TaskTile>
        <TaskTile $w={76} $line><FolderIcon /></TaskTile>
        <TaskTile $w={74}><StoreIcon /></TaskTile>
        <TaskTile><NewOutlookIcon /></TaskTile>
        <TaskTile $line><ChromeIcon /></TaskTile>
        <TaskTile $line><CodeIcon /></TaskTile>
        <Tray>
          <TrayIcon $w={39}><Line size={20} box={20} w={1.4} color="#fff" d="M1.500 14.500L10 6l8.500 8.500" /></TrayIcon>
          <TrayIcon $w={35}><CameraIcon /></TrayIcon>
          <TrayIcon $w={36}><BatteryIcon /></TrayIcon>
          <TrayIcon $w={33}><MutedIcon /></TrayIcon>
          <Lang>ENG</Lang>
          <Clock><span>15:19</span><span>20-05-2025</span></Clock>
          <Notify><MessageIcon /><NotifyCount>1</NotifyCount></Notify>
          <ShowDesktop />
        </Tray>
      </Taskbar>
    </Desktop>
  );
}
